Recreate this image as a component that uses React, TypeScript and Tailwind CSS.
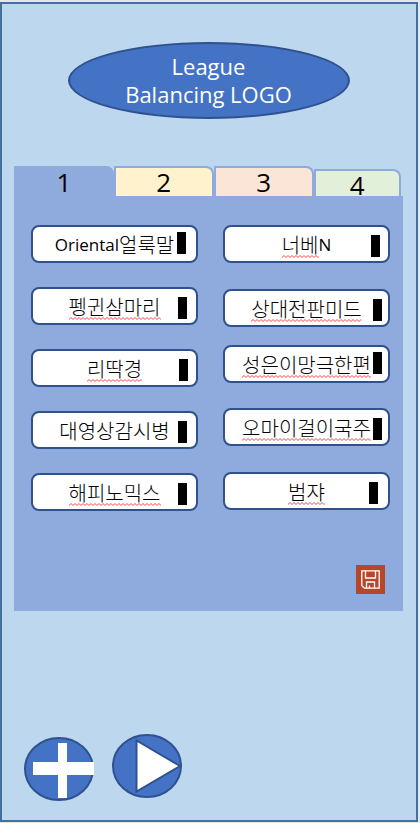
import { useState } from 'react';

type Player = { name: string; latin?: 'start' | 'end'; latinText?: string; flagged: boolean; space: string; bar: string };

const leftPlayers: Player[] = [
  { name: '얼룩말', latin: 'start', latinText: 'Oriental', flagged: false, space: '', bar: 'right-[10px] top-[5px]' },
  { name: '펭귄삼마리', flagged: true, space: 'mt-6', bar: 'right-[9px] top-2' },
  { name: '리딱경', flagged: true, space: 'mt-6', bar: 'right-2 top-2' },
  { name: '대영상감시병', flagged: false, space: 'mt-6', bar: 'right-[9px] top-2' },
  { name: '해피노믹스', flagged: true, space: 'mt-6', bar: 'right-[9px] top-2' },
];

const rightPlayers: Player[] = [
  { name: '너베', latin: 'end', latinText: 'N', flagged: true, space: '', bar: 'right-2 top-2' },
  { name: '상대전판미드', flagged: true, space: 'mt-[26px]', bar: 'right-[6px] top-2' },
  { name: '성은이망극한편', flagged: true, space: 'mt-[18px]', bar: 'right-[6px] top-[5px]' },
  { name: '오마이걸이국주', flagged: true, space: 'mt-[25px]', bar: 'right-[6px] top-2' },
  { name: '범쟈', flagged: true, space: 'mt-[26px]', bar: 'right-[10px] top-2' },
];

const tabs = [
  { id: 1, look: 'h-[30px] flex-[100] rounded-tr-lg bg-[#8faadc]' },
  { id: 2, look: 'h-[30px] flex-[100] rounded-tr-lg bg-[#fff2cc]' },
  { id: 3, look: 'h-[30px] flex-[100] rounded-tr-lg bg-[#fbe5d6]' },
  { id: 4, look: 'h-[27px] flex-[87] rounded-tr-lg bg-[#e2f0d9]' },
];

function Squiggle() {
  return (
    <svg className="absolute bottom-0 left-0 h-[3px] w-full" aria-hidden="true">
      <defs>
        <pattern id="squiggle" width="4" height="3" patternUnits="userSpaceOnUse">
          <path d="M-1 1.5 L0 2.5 L2 0.5 L4 2.5 L5 1.5" fill="none" stroke="#f0303c" strokeWidth="0.9" />
        </pattern>
      </defs>
      <rect width="100%" height="3" fill="url(#squiggle)" />
    </svg>
  );
}

function PlayerList({ players }: { players: Player[] }) {
  return (
    <ul className="min-w-0 flex-1">
      {players.map((p) => (
        <li
          key={p.name}
          className={`relative flex h-[38px] items-center justify-center rounded-lg border-2 border-[#2f528f] bg-white pt-[2px] text-xl font-light whitespace-nowrap text-black ${p.space}`}
        >
          {p.latin === 'start' && <span className="font-['Open_Sans'] text-[17px] font-normal">{p.latinText}</span>}
          <span className="relative leading-[26px]">
            {p.name}
            {p.flagged && <Squiggle />}
          </span>
          {p.latin === 'end' && <span className="font-['Open_Sans'] text-[17px] font-normal">{p.latinText}</span>}
          <span className={`absolute h-[22px] w-[9px] bg-black ${p.bar}`} />
        </li>
      ))}
    </ul>
  );
}

export default function App() {
  const [active, setActive] = useState(1);
  return (
    <div className="flex min-h-screen flex-col bg-[#e7e6e6] pt-[2px] pr-[2px] pb-px font-['Noto_Sans_CJK_KR',sans-serif]">
      <main className="flex flex-1 flex-col border-2 border-[#41719c] bg-[#bdd7ee] pr-[13px] pl-3">
        <h1 className="mx-auto mt-[38px] flex h-[77px] w-full max-w-[282px] items-center justify-center rounded-[50%] border-2 border-[#2f528f] bg-[#4472c4] pb-[2px] text-center font-['Open_Sans',sans-serif] text-[22px] leading-7 text-white">
          <span>
            League
            <br />
            Balancing LOGO
          </span>
        </h1>

        <div role="tablist" className="mt-[47px] flex items-end pr-[2px]">
          {tabs.map((t) => (
            <button
              key={t.id}
              role="tab"
              aria-selected={active === t.id}
              onClick={() => setActive(t.id)}
              className={`border-2 border-b-0 border-[#8faadc] font-['Open_Sans',sans-serif] text-[26px] leading-7 text-black ${t.look}`}
            >
              {t.id}
            </button>
          ))}
        </div>

        <section role="tabpanel" className="bg-[#8faadc] pt-[29px] pr-[13px] pb-[17px] pl-[17px]">
          <div className="flex gap-[25px]">
            <PlayerList players={leftPlayers} />
            <PlayerList players={rightPlayers} />
          </div>
          <div className="mt-[54px] flex justify-end pr-[5px]">
            <button aria-label="Save" className="flex size-[29px] items-center justify-center bg-[#b7472a]">
              <svg width="19" height="19" viewBox="0 0 19 19" fill="none" stroke="#fff" strokeWidth="1.3">
                <path d="M0.8 0.8 H18.2 V18.2 H3.4 L0.8 15.6 Z" />
                <path d="M4.5 0.8 V8 H14.5 V0.8" />
                <path d="M5.5 18.2 V12 H13.5 V18.2 M8.5 15.5 V18.2" />
              </svg>
            </button>
          </div>
        </section>

        <div className="mt-auto flex items-start gap-[17px] pt-6 pb-[19px] pl-[10px]">
          <button aria-label="Add" className="mt-[3px]">
            <svg width="71" height="64" viewBox="0 0 71 64">
              <ellipse cx="35" cy="32" rx="34" ry="31" fill="#4472c4" stroke="#2f528f" strokeWidth="2" />
              <path d="M34 6 H43 V25 H70 V38 H43 V61 H34 V38 H9 V25 H34 Z" fill="#fff" />
            </svg>
          </button>
          <button aria-label="Play">
            <svg width="70" height="64" viewBox="0 0 70 64">
              <ellipse cx="35" cy="32" rx="34" ry="31" fill="#4472c4" stroke="#2f528f" strokeWidth="2" />
              <path d="M24.5 6.5 L68 32 L24.5 57.5 Z" fill="#fff" stroke="#2f528f" strokeWidth="2" />
            </svg>
          </button>
        </div>
      </main>
    </div>
  );
}
